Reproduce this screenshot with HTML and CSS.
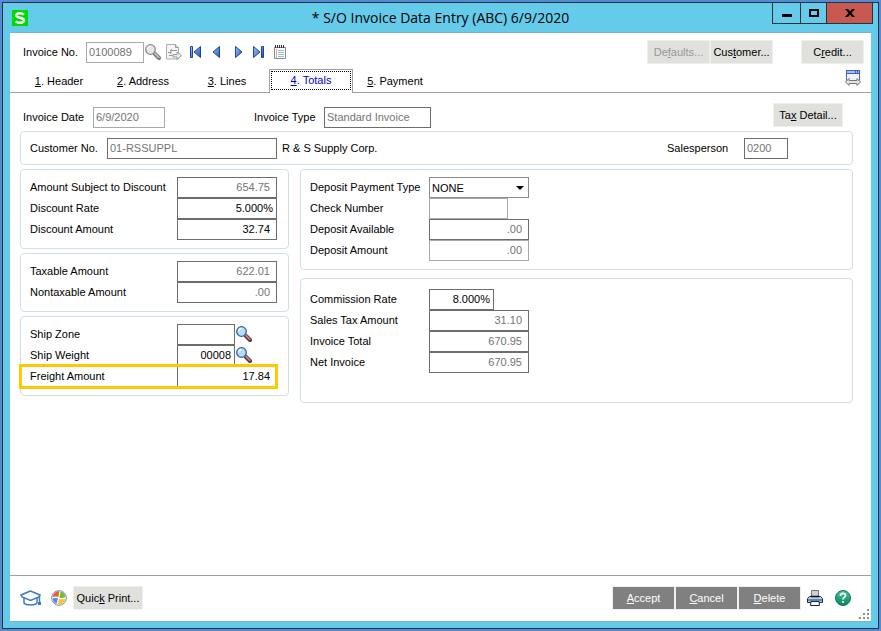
FILE: index.html
```html
<!DOCTYPE html>
<html lang="en">
<head>
<meta charset="utf-8">
<title>S/O Invoice Data Entry</title>
<link rel="stylesheet" href="styles.css">
</head>
<body>
<svg class="defs" aria-hidden="true">
  <defs>
    <linearGradient id="nav" x1="0" y1="0" x2="1" y2="1"><stop offset="0" stop-color="#a9c6f4"/><stop offset="1" stop-color="#1a52c4"/></linearGradient>
    <linearGradient id="green" x1="0" y1="0" x2="0" y2="1"><stop offset="0" stop-color="#4cc29a"/><stop offset="1" stop-color="#058462"/></linearGradient>
    <symbol id="lens" viewBox="0 0 16 16">
      <path d="M10 10L14 14" stroke="#57322f" stroke-width="4" stroke-linecap="round"/>
      <path d="M10 9.500L13.800 13.300" stroke="#b98782" stroke-width="1.800" stroke-linecap="round"/>
      <circle cx="5.500" cy="5.500" r="4.800" fill="#b5dcfb" stroke="#34609f" stroke-width="1.300"/>
      <path d="M2.500 5.500a3 3 0 0 1 3-3" fill="none" stroke="#fff" stroke-width="1.300"/>
    </symbol>
    <symbol id="lens-off" viewBox="0 0 16 16">
      <path d="M10 10L14 14" stroke="#777" stroke-width="4" stroke-linecap="round"/>
      <path d="M10 9.500L13.800 13.300" stroke="#bdbdbd" stroke-width="1.800" stroke-linecap="round"/>
      <circle cx="5.500" cy="5.500" r="4.800" fill="#e8e8e8" stroke="#8a8a8a" stroke-width="1.300"/>
      <path d="M2.500 5.500a3 3 0 0 1 3-3" fill="none" stroke="#fff" stroke-width="1.300"/>
    </symbol>
  </defs>
</svg>
<div class="window">
  <header class="titlebar">
    <svg class="logo" width="16" height="16" viewBox="0 0 16 16"><rect width="16" height="16" fill="#00dc00"/><path d="M12 4.600C10.800 3.600 9.500 3.200 7.900 3.200 5.600 3.200 4.200 4 4.200 5.500c0 3.100 7.800 1.300 7.800 4.800 0 1.600-1.600 2.500-4 2.500-1.700 0-3.200-.5-4.300-1.500" fill="none" stroke="#fff" stroke-width="2.400"/></svg>
    <h1>* S/O Invoice Data Entry (ABC) 6/9/2020</h1>
    <div class="caption">
      <button class="min" aria-label="Minimize"><svg width="10" height="3"><rect width="10" height="3"/></svg></button>
      <button class="max" aria-label="Maximize"><svg width="10" height="8"><path d="M1 1h8v6H1z" fill="none" stroke="#000" stroke-width="2"/></svg></button>
      <button class="close" aria-label="Close"><svg width="10" height="8"><path d="M0 0h3l2 2.500L7 0h3L6.500 4 10 8H7L5 5.500 3 8H0l3.500-4z"/></svg></button>
    </div>
  </header>
  <main class="client">
    <div class="toolbar">
      <label for="invno">Invoice No.</label>
      <input id="invno" class="light w-no" value="0100089" disabled>
      <button class="icon lookup" aria-label="Look up invoice"><svg width="16" height="16"><use href="#lens-off"/></svg></button>
      <button class="icon copy" aria-label="Copy from"><svg width="16" height="16" viewBox="0 0 16 16"><path d="M.5.500h9l3 3v11.500H.5z" fill="#f5f5f5" stroke="#adadad"/><path d="M9.500.500v3h3" fill="#ddd" stroke="#9a9a9a"/><path d="M2 8.500h3.500M4 6.500h7M3 11.500h4M5.500 5l-1 5" fill="none" stroke="#9a9a9a"/><path d="M7 10.500h4V8l4.500 3.700L11 15.500V13H7z" fill="#ececec" stroke="#9a9a9a"/></svg></button>
      <button class="icon nav" aria-label="First"><svg width="12" height="12" viewBox="0 0 12 12"><path d="M.5.500h2v11h-2zM10.500.500v11L4 6z" fill="url(#nav)" stroke="#1c449c"/></svg></button>
      <button class="icon nav" aria-label="Previous"><svg width="12" height="12" viewBox="0 0 12 12"><path d="M8.500.500v11L2 6z" fill="url(#nav)" stroke="#1c449c"/></svg></button>
      <button class="icon nav" aria-label="Next"><svg width="12" height="12" viewBox="0 0 12 12"><path d="M3.500.500v11L10 6z" fill="url(#nav)" stroke="#1c449c"/></svg></button>
      <button class="icon nav" aria-label="Last"><svg width="12" height="12" viewBox="0 0 12 12"><path d="M8.500.500h2v11h-2zM.5.500v11L7 6z" fill="url(#nav)" stroke="#1c449c"/></svg></button>
      <button class="icon" aria-label="Memo"><svg width="12" height="14" viewBox="0 0 12 14"><path d="M.5 2v11.500h11V2" fill="#fff" stroke="#8c8c84"/><path d="M0 2.500h12" stroke="#8a8a8a"/><path d="M1.500 0v3M3.500 0v3M5.500 0v3M7.500 0v3M9.500 0v3" stroke="#333"/><path d="M4 5.500h6M4 7.500h6M4 9.500h6M4 11.500h6" stroke="#8fc0dc"/><path d="M2.500 4v9" stroke="#e2a184"/></svg></button>
      <div class="links">
        <button class="btn" disabled>De<u>f</u>aults...</button>
        <button class="btn">Cus<u>t</u>omer...</button>
        <button class="btn credit">C<u>r</u>edit...</button>
      </div>
    </div>
    <nav class="tabs">
      <a class="tab" href="#header"><span><u>1</u>. Header</span></a>
      <a class="tab" href="#address"><span><u>2</u>. Address</span></a>
      <a class="tab" href="#lines"><span><u>3</u>. Lines</span></a>
      <a class="tab active" href="#totals"><span><u>4</u>. Totals</span></a>
      <a class="tab" href="#payment"><span><u>5</u>. Payment</span></a>
      <div class="rule"><button class="icon" aria-label="Resize window"><svg width="16" height="16" viewBox="0 0 16 16"><path d="M1.500 1v9.500h13V1z" fill="#f2f2fc" stroke="#4467ad"/><path d="M1 0h14v4H1z" fill="#3e62b2"/><path d="M2 2h8M11 2h1M13 2h1" stroke="#a3c0f5" stroke-width="2"/><path d="M.5 12L4 8.500v2h8v-2l3.500 3.500L12 15.500v-2H4v2z" fill="#e5e5e5" stroke="#777"/></svg></button></div>
    </nav>
    <form class="page">
      <div class="summary">
        <label for="date">Invoice Date</label>
        <input id="date" class="light w-date" value="6/9/2020" disabled>
        <label for="type" class="type">Invoice Type</label>
        <input id="type" class="w-type" value="Standard Invoice" disabled>
        <button type="button" class="btn tax">Ta<u>x</u> Detail...</button>
      </div>
      <section class="panel customer">
        <label for="cust">Customer No.</label>
        <input id="cust" class="w-cust" value="01-RSSUPPL" disabled>
        <span class="name">R &amp; S Supply Corp.</span>
        <label for="sales">Salesperson</label>
        <input id="sales" class="w-sales" value="0200" disabled>
      </section>
      <div class="columns">
        <div class="left">
          <section class="panel">
            <div class="row"><label for="asd">Amount Subject to Discount</label><input id="asd" class="num" value="654.75" disabled></div>
            <div class="row"><label for="dr">Discount Rate</label><input id="dr" class="num pct" value="5.000%"></div>
            <div class="row"><label for="da">Discount Amount</label><input id="da" class="num" value="32.74"></div>
          </section>
          <section class="panel">
            <div class="row"><label for="ta">Taxable Amount</label><input id="ta" class="num" value="622.01" disabled></div>
            <div class="row"><label for="na">Nontaxable Amount</label><input id="na" class="num" value=".00" disabled></div>
          </section>
          <section class="panel">
            <div class="row"><label for="sz">Ship Zone</label><input id="sz" class="short"><button type="button" class="icon find" aria-label="Look up zone"><svg width="16" height="16"><use href="#lens"/></svg></button></div>
            <div class="row"><label for="sw">Ship Weight</label><input id="sw" class="num pct short" value="00008"><button type="button" class="icon find" aria-label="Look up weight"><svg width="16" height="16"><use href="#lens"/></svg></button></div>
            <div class="row marked"><label for="fa">Freight Amount</label><input id="fa" class="num" value="17.84"></div>
          </section>
        </div>
        <div class="right">
          <section class="panel">
            <div class="row"><label for="dpt">Deposit Payment Type</label><span class="pick"><select id="dpt"><option>NONE</option></select></span></div>
            <div class="row"><label for="cn">Check Number</label><input id="cn" class="light w-check" disabled></div>
            <div class="row"><label for="dav">Deposit Available</label><input id="dav" class="num" value=".00" disabled></div>
            <div class="row"><label for="dam">Deposit Amount</label><input id="dam" class="num light" value=".00" disabled></div>
          </section>
          <section class="panel totals">
            <div class="row"><label for="cr">Commission Rate</label><input id="cr" class="num pct w-rate" value="8.000%"></div>
            <div class="row"><label for="sta">Sales Tax Amount</label><input id="sta" class="num" value="31.10" disabled></div>
            <div class="row"><label for="it">Invoice Total</label><input id="it" class="num" value="670.95" disabled></div>
            <div class="row"><label for="ni">Net Invoice</label><input id="ni" class="num" value="670.95" disabled></div>
          </section>
        </div>
      </div>
    </form>
    <footer class="footer">
      <button class="icon" aria-label="Learn"><svg width="22" height="16" viewBox="0 0 22 16"><path d="M4 6.500v6.500c2 2.600 11 2.600 13 0V6.500" fill="#fff" stroke="#3e7dba" stroke-width="1.500"/><path d="M10.500 1L1 5l1 2 8.500 3.500L19 7l1-2z" fill="#fff" stroke="#3e7dba" stroke-width="1.500"/><path d="M19.500 5.500v8" stroke="#3e7dba" stroke-width="1.500"/><path d="M18 12h3v3h-3z" fill="#3e7dba"/></svg></button>
      <button class="icon win" aria-label="Office"><svg width="16" height="16" viewBox="0 0 16 16"><circle cx="8" cy="8" r="7.400" fill="#fff" stroke="#7795b8"/><path d="M1.500 7A6.500 6.500 0 0 1 8.500 1.300L7.300 7Q5 5.800 1.500 7z" fill="#e8622c"/><path d="M9.500 1.600A6.500 6.500 0 0 1 14.500 7Q11 9 8.300 7.500z" fill="#77bd38"/><path d="M1.500 8.500Q4 7 7 8.200L5.500 14A6.500 6.500 0 0 1 1.500 8.500z" fill="#5a8be8"/><path d="M8 8.700Q11 10 14.500 8.500A6.500 6.500 0 0 1 6.700 14.500z" fill="#f8c52f"/></svg></button>
      <button class="btn quick">Quic<u>k</u> Print...</button>
      <div class="actions">
        <button class="btn dark"><u>A</u>ccept</button>
        <button class="btn dark"><u>C</u>ancel</button>
        <button class="btn dark"><u>D</u>elete</button>
      </div>
      <button class="icon print" aria-label="Print"><svg width="16" height="16" viewBox="0 0 16 16"><path d="M4.500.500h7v7h-7z" fill="#d0d0d0" stroke="#777"/><path d="M2.500 6.500h11l2 2v4H.5v-4z" fill="#b9cbe6" stroke="#222c40"/><path d="M4 6.500h8" stroke="#111" stroke-width="1.500"/><path d="M1 10h14" stroke="#3673bd" stroke-width="1.500"/><path d="M4 11.500h8l.5 4h-9z" fill="#fff" stroke="#222"/></svg></button>
      <button class="icon help" aria-label="Help"><svg width="16" height="16" viewBox="0 0 16 16"><circle cx="8" cy="8" r="7.500" fill="url(#green)" stroke="#08795a"/><path d="M5.500 6c0-3.400 5-3.400 5-.5C10.500 7.500 8 7.300 8 9.500" fill="none" stroke="#fff" stroke-width="1.800"/><circle cx="8" cy="12" r="1.100" fill="#fff"/></svg></button>
      <svg class="grip" width="10" height="10" fill="#8f8f8f"><path d="M8 0h2v2H8zM4 4h2v2H4zM8 4h2v2H8zM0 8h2v2H0zM4 8h2v2H4zM8 8h2v2H8z"/></svg>
    </footer>
  </main>
</div>
</body>
</html>
```
FILE: styles.css
```css
* { box-sizing: border-box; }

body {
  margin: 0;
  padding: 2px;
  min-height: 100vh;
  display: flex;
  background: #548bd4;
  color: #000;
  font: 11px/14px "Liberation Sans", Arial, sans-serif;
}

button, input, select {
  margin: 0;
  padding: 0;
  border: 0;
  border-radius: 0;
  background: none;
  color: inherit;
  font: inherit;
}

svg { display: block; }
.defs { position: absolute; width: 0; height: 0; }
label { white-space: nowrap; }

.window {
  flex: 1;
  min-width: 0;
  display: flex;
  flex-direction: column;
  padding: 0 7px 6px;
  border: 1px solid #2b3138;
  background: #65cbeb;
}

/* Title bar */
.titlebar {
  display: flex;
  align-items: center;
  height: 29px;
}
.logo { margin-left: 2px; }
.titlebar h1 {
  flex: 1;
  margin: 0 0 0 81px;
  text-align: center;
  font: 14px/20px "Open Sans", "Noto Sans", sans-serif;
}
.caption {
  display: flex;
  align-self: flex-start;
  margin-right: -2px;
  border: 1px solid #2b3138;
  border-top: 0;
}
.caption button {
  display: flex;
  align-items: center;
  justify-content: center;
  width: 27px;
  height: 20px;
}
.caption .min svg { margin-top: 5px; }
.caption .max { width: 26px; border-left: 1px solid #2b3138; }
.caption .close {
  width: 46px;
  border-left: 1px solid #2b3138;
  background: #c75950;
}

.client {
  flex: 1;
  display: flex;
  flex-direction: column;
  border: solid #7fafc4;
  border-width: 1px 0;
  background: #fff;
}

/* Fields and buttons */
input {
  width: 100px;
  height: 21px;
  padding: 0 2px 1px;
  border: 1px solid #6d6d6d;
  background: #fff;
}
input:disabled { color: #747474; }
input.light { border-color: #a8abab; }
.num { padding-right: 6px; text-align: right; }
.pct { padding-right: 3px; }
.w-no { width: 58px; }
.w-date { width: 72px; }
.w-type { width: 107px; }
.w-cust { width: 170px; }
.w-sales { width: 44px; }
.w-check { width: 79px; }
.w-rate { width: 65px; }
.short { width: 58px; }

.btn {
  min-width: 63px;
  height: 24px;
  padding: 0 2px;
  border: 1px solid #efefed;
  background: #e0e1dc;
  text-align: center;
  white-space: nowrap;
}
.btn:disabled { color: #979797; }
.btn.dark { background: #808080; color: #fff; }

/* Record toolbar */
.toolbar {
  display: flex;
  align-items: center;
  height: 25px;
  margin-top: 7px;
  padding: 0 7px 0 13px;
}
.toolbar label { width: 63px; padding-bottom: 1px; }
.toolbar .icon { padding-bottom: 1px; }
.lookup { margin-left: 1px; }
.copy { margin: 0 8px 0 5px; }
.nav { width: 21px; text-align: left; }
.links { display: flex; align-self: flex-start; margin-left: auto; }
.credit { margin-left: 28px; }

/* Tabs */
.tabs {
  display: flex;
  height: 24px;
  margin-top: 4px;
}
.tabs::before {
  content: "";
  width: 7px;
  border-bottom: 1px solid #a0a0a0;
}
.tab {
  display: flex;
  align-items: center;
  justify-content: center;
  width: 84px;
  border-bottom: 1px solid #a0a0a0;
  color: #000;
  text-decoration: none;
}
.tab.active {
  align-items: flex-start;
  padding: 1px 1px 0;
  border: solid #a0a0a0;
  border-width: 1px 1px 0;
  color: #0000c8;
}
.active span {
  flex: 1;
  padding: 1px 0 2px;
  border: 1px dotted #000;
  text-align: center;
}
.rule {
  flex: 1;
  display: flex;
  justify-content: flex-end;
  padding: 1px 10px 0 0;
  border-bottom: 1px solid #a0a0a0;
}
.rule .icon { align-self: flex-start; }

/* Page */
.page {
  flex: 1;
  padding: 10px 18px 0 10px;
}
.summary {
  display: flex;
  align-items: flex-start;
  height: 28px;
  padding: 0 10px 0 3px;
}
.summary label { width: 70px; margin-top: 7px; }
.summary input { margin-top: 4px; }
.summary .type { margin-left: 89px; }
.tax { margin-left: auto; min-width: 70px; }

.panel {
  border: 1px solid #d3dfe8;
  border-radius: 4px;
}
.customer {
  display: flex;
  align-items: center;
  height: 34px;
  padding: 1px 64px 0 9px;
}
.customer label { width: 77px; }
.customer label, .name { padding-bottom: 1px; }
.name { flex: 1; padding-left: 5px; }

.columns {
  display: flex;
  gap: 11px;
  margin-top: 4px;
}
.left {
  flex: none;
  width: 269px;
  display: flex;
  flex-direction: column;
  gap: 4px;
}
.left .panel { padding: 7px 11px 8px 0; }
.right {
  flex: 1;
  display: flex;
  flex-direction: column;
  gap: 8px;
}
.right .panel { padding: 7px 0 8px; }
.right .totals { padding: 10px 0 29px; }

.row {
  display: flex;
  align-items: center;
  height: 21px;
  padding-left: 9px;
}
.row label { width: 147px; padding-bottom: 1px; }
.right .row label { width: 119px; }
.find { margin-left: 1px; padding-bottom: 1px; }

.marked { position: relative; }
.marked::after {
  content: "";
  position: absolute;
  inset: -2px -1px -2px -2px;
  border: 3px solid #ffc800;
  pointer-events: none;
}

.pick { position: relative; }
.pick select {
  display: block;
  width: 100px;
  height: 21px;
  padding: 0 2px;
  border: 1px solid #8c8c8c;
  background: #fff;
  appearance: none;
}
.pick::after {
  content: "";
  position: absolute;
  top: 9px;
  right: 5px;
  border: 4px solid transparent;
  border-top-color: #000;
  border-bottom: 0;
  pointer-events: none;
}

/* Footer */
.footer {
  display: flex;
  align-items: center;
  height: 46px;
  padding: 0 2px 1px 10px;
  border-top: 1px solid #a0a0a0;
}
.win { margin-left: 9px; }
.quick { min-width: 70px; margin-left: 6px; }
.actions { display: flex; margin-left: auto; }
.print { margin-left: 6px; }
.help { margin-left: 12px; }
.grip { align-self: flex-end; margin: 0 0 1px 8px; }
```
